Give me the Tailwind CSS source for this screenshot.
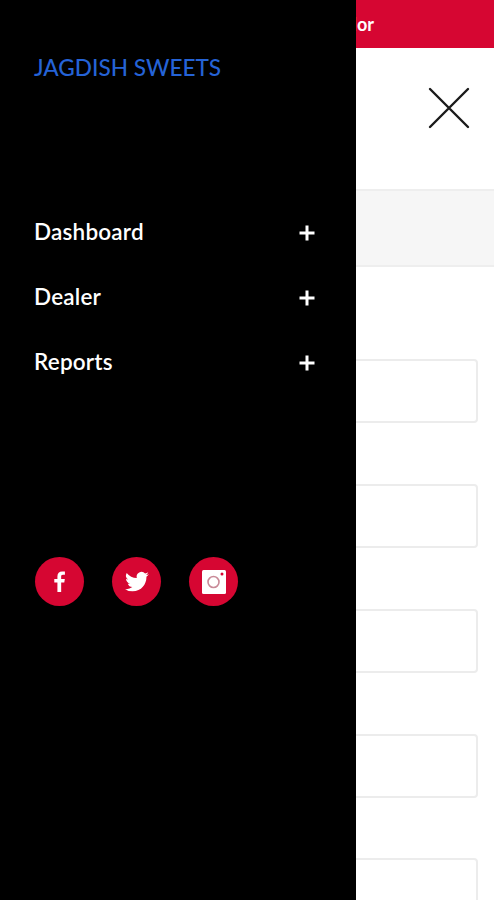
<!DOCTYPE html>
<html lang="en">
<head>
<meta charset="utf-8">
<title>Jagdish Sweets</title>
<script src="https://cdn.jsdelivr.net/npm/@tailwindcss/browser@4"></script>
</head>
<body class="bg-white font-['Lato','Liberation_Sans',sans-serif]">
<div class="relative w-[494px] h-[900px] overflow-hidden">

  <!-- page behind the drawer -->
  <div class="h-12 bg-[#d60632] flex items-center justify-end pr-[120px] text-white text-[18px] font-bold">
    <span>Vendor</span>
  </div>
  <div class="h-[141px] flex justify-end pt-[38px] pr-[23px]">
    <svg class="w-[44px] h-[44px]" viewBox="0 0 44 44" fill="none" stroke="#1a1a1a" stroke-width="2.4" stroke-linecap="round">
      <path d="M3 3 L41 41 M41 3 L3 41"/>
    </svg>
  </div>
  <div class="h-[78px] bg-[#f6f6f6] border-t-2 border-b-2 border-[#eeeeee]"></div>
  <div class="px-4 pt-[92px] flex flex-col gap-[61px]">
    <div class="h-16 shrink-0 rounded border-2 border-[#ececec]"></div>
    <div class="h-16 shrink-0 rounded border-2 border-[#ececec]"></div>
    <div class="h-16 shrink-0 rounded border-2 border-[#ececec]"></div>
    <div class="h-16 shrink-0 rounded border-2 border-[#ececec]"></div>
    <div class="h-16 shrink-0 -mt-px rounded border-2 border-[#ececec]"></div>
  </div>

  <!-- drawer -->
  <aside class="absolute inset-y-0 left-0 w-[356px] bg-black pl-[34px] pr-[41px]">
    <div class="pt-[54px] text-[#2563d6] text-[22.6px] leading-[27px] font-medium whitespace-nowrap">JAGDISH SWEETS</div>

    <nav class="mt-[136px] flex flex-col gap-[35px] text-white text-[22.5px] leading-[30px] font-semibold tracking-[0.2px]">
      <div class="flex items-center justify-between">
        <span>Dashboard</span>
        <svg class="w-4 h-4 mt-[1px]" viewBox="0 0 16 16" stroke="#fff" stroke-width="3"><path d="M8 0.5V15.5M0.5 8H15.5"/></svg>
      </div>
      <div class="flex items-center justify-between">
        <span>Dealer</span>
        <svg class="w-4 h-4 mt-[1px]" viewBox="0 0 16 16" stroke="#fff" stroke-width="3"><path d="M8 0.5V15.5M0.5 8H15.5"/></svg>
      </div>
      <div class="flex items-center justify-between">
        <span>Reports</span>
        <svg class="w-4 h-4 mt-[1px]" viewBox="0 0 16 16" stroke="#fff" stroke-width="3"><path d="M8 0.5V15.5M0.5 8H15.5"/></svg>
      </div>
    </nav>

    <div class="mt-[180px] ml-px flex gap-[28px]">
      <a class="w-[49px] h-[49px] rounded-full bg-[#d60632] flex items-center justify-center">
        <svg class="w-[25px] h-[25px]" viewBox="0 0 24 24" fill="#fff"><path d="M13.6 22v-9h3l.5-3.5h-3.5V7.3c0-1 .3-1.7 1.7-1.7h1.9V2.4c-.3 0-1.400-.1-2.700-.1-2.700 0-4.500 1.600-4.500 4.600v2.600H7v3.500h3v9z"/></svg>
      </a>
      <a class="w-[49px] h-[49px] rounded-full bg-[#d60632] flex items-center justify-center">
        <svg class="w-[26px] h-[26px]" viewBox="0 0 24 24" fill="#fff"><path d="M23 4.900c-.8.4-1.700.6-2.600.7.900-.6 1.600-1.400 2-2.500-.9.500-1.800.9-2.900 1.100A4.500 4.500 0 0 0 11.800 8.300 12.800 12.800 0 0 1 2.500 3.600a4.500 4.500 0 0 0 1.400 6c-.7 0-1.400-.2-2-.6v.1c0 2.200 1.500 4 3.600 4.400-.7.200-1.400.2-2 .1.600 1.800 2.200 3.100 4.200 3.100A9 9 0 0 1 1 18.600 12.700 12.700 0 0 0 7.900 20.600c8.300 0 12.800-6.900 12.800-12.800v-.6c.9-.6 1.700-1.400 2.300-2.300z"/></svg>
      </a>
      <a class="w-[49px] h-[49px] rounded-full bg-[#d60632] flex items-center justify-center">
        <svg class="w-[24px] h-[24px]" viewBox="0 0 24 24">
          <rect x="0" y="0" width="24" height="24" rx="1.500" fill="#fff"/>
          <circle cx="11.500" cy="12" r="5.500" fill="none" stroke="#c98a98" stroke-width="1.600"/>
          <circle cx="20" cy="4" r="1.500" fill="#d60632"/>
        </svg>
      </a>
    </div>
  </aside>
</div>
</body>
</html>
